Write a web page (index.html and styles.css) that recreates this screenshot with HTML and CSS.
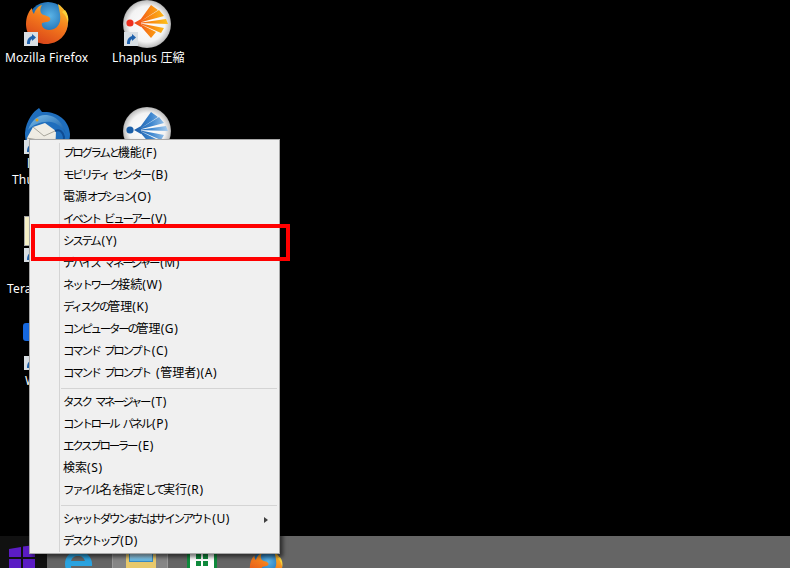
FILE: index.html
```html
<!DOCTYPE html>
<html lang="ja">
<head>
<meta charset="utf-8">
<title>Windows デスクトップ</title>
<link rel="stylesheet" href="styles.css">
</head>
<body>
<svg class="defs" width="0" height="0" aria-hidden="true">
  <defs>
    <radialGradient id="globe" cx="0.55" cy="0.35" r="0.7"><stop offset="0" stop-color="#5bb4e6"/><stop offset="0.6" stop-color="#1f6fb4"/><stop offset="1" stop-color="#12396f"/></radialGradient>
    <linearGradient id="fox" x1="0.8" y1="0" x2="0.3" y2="1"><stop offset="0" stop-color="#f9c22c"/><stop offset="0.45" stop-color="#f47a1c"/><stop offset="1" stop-color="#d8431a"/></linearGradient>
    <radialGradient id="pearl" cx="0.5" cy="0.5" r="0.52"><stop offset="0" stop-color="#ffffff"/><stop offset="0.72" stop-color="#f3f3f3"/><stop offset="0.92" stop-color="#c4c4c4"/><stop offset="1" stop-color="#8a8a8a"/></radialGradient>
    <linearGradient id="wing" x1="0" y1="0" x2="1" y2="1"><stop offset="0" stop-color="#7fc0ec"/><stop offset="1" stop-color="#115aa6"/></linearGradient>
    <linearGradient id="fan-warm" gradientUnits="userSpaceOnUse" x1="11" y1="23" x2="45" y2="23"><stop offset="0" stop-color="#f0401c"/><stop offset="0.5" stop-color="#f98a12"/><stop offset="1" stop-color="#fdc21a"/></linearGradient>
    <linearGradient id="fan-cool" gradientUnits="userSpaceOnUse" x1="11" y1="23" x2="45" y2="23"><stop offset="0" stop-color="#1a5aa6"/><stop offset="0.5" stop-color="#3d86cf"/><stop offset="1" stop-color="#a8cdee"/></linearGradient>
    <symbol id="firefox" viewBox="0 0 44 44">
      <circle cx="23" cy="21" r="20" fill="url(#globe)"/>
      <path d="M33 3c6 4 10 10 10 18 0 13-10 22-22 22C9 43 1 34 1 23 1 17 3 11 7 7c0 3 1 5 2 6 1-4 4-8 8-9-2 3-2 6-1 8 2 3 7 2 9 5 1 2-1 4-4 4l-4 1c-1 3 2 7 7 7 6 0 10-4 11-9 1-6-1-12-2-17z" fill="url(#fox)"/>
      <path d="M40 9c3 4 4 8 3 13-1-4-2-8-6-11z" fill="#f9d23c"/>
    </symbol>
    <symbol id="lhaplus-warm" viewBox="0 0 48 48">
      <circle cx="24" cy="24" r="24" fill="url(#pearl)"/>
      <circle cx="7" cy="23" r="3.600" fill="#ee2f1e"/>
      <path d="M11 23l7-4v8zM15 23L28 5l7 5zM15 23L36 10l5 6zM15 23l28-4 2 5zM15 23l26 5-3 5zM15 23l18 9-5 6z" fill="url(#fan-warm)"/>
    </symbol>
    <symbol id="lhaplus-cool" viewBox="0 0 48 48">
      <circle cx="24" cy="24" r="24" fill="url(#pearl)"/>
      <circle cx="7" cy="23" r="3.600" fill="#1b5fa8"/>
      <path d="M11 23l7-4v8zM15 23L28 5l7 5zM15 23L36 10l5 6zM15 23l28-4 2 5zM15 23l26 5-3 5zM15 23l18 9-5 6z" fill="url(#fan-cool)"/>
    </symbol>
    <symbol id="shortcut" viewBox="0 0 14 14">
      <rect width="14" height="14" fill="#d9dfe4"/>
      <path d="M3 12c0-5 2-7 5-8V2l4 3.500-4 3.500V7C6 8 6 10 6 12z" fill="#1f62ad"/>
    </symbol>
  </defs>
</svg>
<main class="desktop">
  <div class="desk-item">
    <svg class="icon-firefox"><use href="#firefox"/></svg>
    <svg class="badge badge-ff"><use href="#shortcut"/></svg>
    <span class="desk-label label-ff">Mozilla Firefox</span>
  </div>
  <div class="desk-item">
    <svg class="icon-lha"><use href="#lhaplus-warm"/></svg>
    <svg class="badge badge-lha"><use href="#shortcut"/></svg>
    <span class="desk-label label-lha">Lhaplus 圧縮</span>
  </div>
  <div class="desk-item">
    <svg class="icon-thunder" viewBox="0 0 46 46">
      <path d="M1 25C2 12 10 3 15 0l3 4c14-1 27 7 28 22 0 8-3 15-8 20H8C3 41 1 33 1 25z" fill="#1f6ebd"/>
      <path d="M4 22C8 11 15 6 23 7c9 1 16 8 19 19-4-7-9-11-15-12-9-1-17 2-23 8z" fill="url(#wing)"/>
      <path d="M3 30l6-11 12-4 11 8-1 23H4z" fill="#efece4"/>
      <path d="M9 19l11 9 11-5M3 30l11 2" fill="none" stroke="#a8a69c" stroke-width="1"/>
      <path d="M31 23c5-2 8 1 9 6 0 5-1 10-3 15" fill="none" stroke="#0f4c94" stroke-width="2"/>
      <circle cx="13" cy="12" r="1.500" fill="#e0a020"/>
    </svg>
    <svg class="badge badge-th"><use href="#shortcut"/></svg>
    <span class="desk-label label-thin">l</span>
    <span class="desk-label label-thu">Thu</span>
  </div>
  <div class="desk-item">
    <svg class="icon-lha icon-lha2"><use href="#lhaplus-cool"/></svg>
  </div>
  <div class="desk-item">
    <div class="paper"></div>
    <svg class="badge badge-te"><use href="#shortcut"/></svg>
    <span class="desk-label label-tera">Tera</span>
  </div>
  <div class="desk-item">
    <div class="blue-tile"></div>
    <svg class="badge badge-wi"><use href="#shortcut"/></svg>
    <span class="desk-label label-w">W</span>
  </div>
</main>
<nav class="menu">
  <ul class="menu-group">
    <li class="menu-item">プログラムと<b>機能</b><i>(F)</i></li>
    <li class="menu-item">モビリティ センター<i>(B)</i></li>
    <li class="menu-item"><b>電源</b>オプション<i>(O)</i></li>
    <li class="menu-item">イベント ビューアー<i>(V)</i></li>
    <li class="menu-item">システム<i>(Y)</i></li>
    <li class="menu-item">デバイス マネージャー<i>(M)</i></li>
    <li class="menu-item">ネットワーク<b>接続</b><i>(W)</i></li>
    <li class="menu-item">ディスクの<b>管理</b><i>(K)</i></li>
    <li class="menu-item">コンピューターの<b>管理</b><i>(G)</i></li>
    <li class="menu-item">コマンド プロンプト<i>(C)</i></li>
    <li class="menu-item">コマンド プロンプト <i>(</i><b>管理者</b><i>)(A)</i></li>
  </ul>
  <div class="menu-sep sep-a"></div>
  <ul class="menu-group">
    <li class="menu-item">タスク マネージャー<i>(T)</i></li>
    <li class="menu-item">コントロール パネル<i>(P)</i></li>
    <li class="menu-item">エクスプローラー<i>(E)</i></li>
    <li class="menu-item"><b>検索</b><i>(S)</i></li>
    <li class="menu-item">ファイル<b>名</b>を<b>指定</b>して<b>実行</b><i>(R)</i></li>
  </ul>
  <div class="menu-sep sep-b"></div>
  <ul class="menu-group">
    <li class="menu-item">シャットダウンまたはサインアウト<i>(U)</i><span class="arrow"></span></li>
    <li class="menu-item">デスクトップ<i>(D)</i></li>
  </ul>
</nav>
<div class="callout"></div>
<footer class="taskbar">
  <div class="start">
    <svg class="start-logo" viewBox="0 0 26 23"><path d="M0 4l12-2v10H0zM14 1.600L26 0v12H14zM0 14h12v9H0zM14 14h12v9H14z" fill="#5b1cc4"/></svg>
  </div>
  <div class="task-btn">
    <svg class="task-icon" viewBox="0 0 30 32"><path d="M15 4C7 4 2 10 2 17s5 13 13 13c6 0 11-3 13-8h-7c-1 2-3 3-6 3-4 0-7-2-7-6h21c1-8-5-15-14-15zM8 14c1-3 3-5 7-5s6 2 7 5z" fill="#2aa3e0"/></svg>
  </div>
  <div class="task-btn active">
    <div class="folder"><div class="folder-pane"></div></div>
  </div>
  <div class="task-btn">
    <svg class="task-icon" viewBox="0 0 30 32"><rect width="30" height="32" fill="#fff"/><path d="M0 0h30v32H0zM3 3v26h24V3z" fill="#0f8a3c"/><path d="M9 7h5v5H9zM16 7h5v5h-5zM9 14h5v5H9zM16 14h5v5h-5z" fill="#0f8a3c"/></svg>
  </div>
  <div class="task-btn">
    <svg class="task-icon ffx"><use href="#firefox"/></svg>
  </div>
</footer>
</body>
</html>
```

FILE: styles.css
```css
* { box-sizing: border-box; }
html, body { margin: 0; padding: 0; height: 100%; }
body {
  position: relative;
  width: 790px;
  height: 568px;
  overflow: hidden;
  background: #000;
  display: flex;
  flex-direction: column;
  font-family: "Noto Sans", "Noto Sans CJK JP", sans-serif;
}
.defs { position: absolute; }

/* desktop: free canvas of shortcuts */
.desktop { position: relative; flex: 1; }
.desk-item { position: absolute; left: 0; top: 0; width: 200px; height: 0; }
.desk-item svg, .desk-item div, .desk-label { position: absolute; }
.desk-label { color: #fff; font-size: 12px; line-height: 14px; white-space: nowrap; letter-spacing: 0.15px; }
.icon-firefox { left: 25px; top: 1px; width: 44px; height: 44px; }
.icon-lha { left: 123px; top: 0; width: 48px; height: 48px; }
.icon-lha2 { top: 107px; }
.badge { width: 14px; height: 14px; }
.badge-ff { left: 24px; top: 32px; }
.badge-lha { left: 124px; top: 32px; }
.badge-th { left: 24px; top: 140px; }
.badge-te { left: 24px; top: 248px; }
.badge-wi { left: 24px; top: 356px; }
.label-ff { left: 5px; top: 51px; }
.label-lha { left: 112px; top: 51px; }
.icon-thunder { left: 24px; top: 108px; width: 46px; height: 46px; }
.label-thin { left: 27px; top: 157px; }
.label-thu { left: 12px; top: 173px; }
.label-tera { left: 7px; top: 282px; }
.label-w { left: 25px; top: 374px; }
.paper { left: 24px; top: 216px; width: 20px; height: 30px; background: #f6f1c8; border: 1px solid #a5a5a5; }
.blue-tile { left: 23px; top: 323px; width: 20px; height: 18px; background: #1668df; border-radius: 3px; }

/* context menu */
.menu {
  position: absolute;
  left: 29px;
  top: 139px;
  width: 251px;
  height: 415px;
  padding: 3px 2px 0;
  background: #f0f0f0 linear-gradient(#d4d4d4, #d4d4d4) 29px 3px / 1px 409px no-repeat;
  border: 1px solid #a8a8a8;
  box-shadow: 3px 3px 4px rgba(0, 0, 0, 0.55);
  color: #000;
  font-family: "Noto Sans CJK JP", sans-serif;
}
.menu-group { list-style: none; margin: 0; padding: 0; }
.menu-item {
  position: relative;
  height: 22px;
  padding-left: 31px;
  font-size: 11.5px;
  line-height: 18px;
  letter-spacing: -2.3px;
  word-spacing: 4px;
  white-space: nowrap;
}
.menu-item b { font-weight: 400; font-size: 12px; letter-spacing: 0; }
.menu-item i {
  font-family: "Noto Sans", sans-serif;
  font-style: normal;
  font-size: 12px;
  letter-spacing: 0.6px;
  margin-left: 2px;
}
.menu-item b + i { margin-left: 0; }
.arrow {
  position: absolute;
  right: 9px;
  top: 8px;
  border-left: 4px solid #404040;
  border-top: 3px solid transparent;
  border-bottom: 3px solid transparent;
}
.menu-sep { margin-left: 29px; position: relative; }
.menu-sep::after { content: ""; position: absolute; left: 0; right: 0; height: 1px; background: #d4d4d4; top: 3px; }
.sep-a { height: 7px; }
.sep-b { height: 7px; }

/* red annotation */
.callout {
  position: absolute;
  left: 31px;
  top: 224px;
  width: 259px;
  height: 37px;
  border: 4px solid #f00;
}

/* taskbar */
.taskbar {
  height: 32px;
  flex: none;
  background: #656565;
  display: flex;
  overflow: hidden;
}
.start { width: 47px; background: #111; padding: 9px 0 0 9px; }
.start-logo { display: block; width: 26px; height: 23px; }
.task-btn { width: 62px; padding: 11px 0 0 16px; }
.task-btn:nth-of-type(2) { width: 65px; }
.task-btn.active {
  width: 56px;
  margin: 0 3px 0 0;
  padding: 11px 0 0 13px;
  background: #868686;
  border-left: 1px solid #9a9a9a;
  border-right: 1px solid #9a9a9a;
}
.task-icon { display: block; width: 30px; height: 32px; }
.ffx { width: 34px; height: 34px; margin-top: 3px; }
.folder { width: 30px; height: 24px; background: #e8c96c; padding: 3px; border-radius: 1px; }
.folder-pane { height: 12px; background: linear-gradient(#d8f0fb, #5fb5e3); border: 1px solid #3a8cc4; }
```
